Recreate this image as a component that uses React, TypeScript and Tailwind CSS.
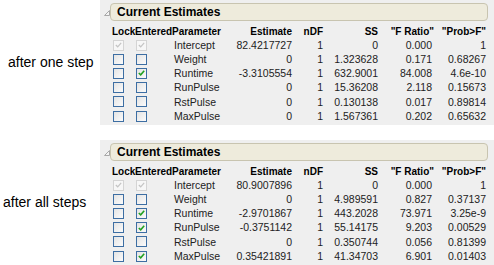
import React from "react";

type Row = {
  name: string;
  lock: "dis" | "off";
  entered: "dis" | "off" | "on";
  est: string;
  ndf: string;
  ss: string;
  f: string;
  p: string;
};

const ONE_STEP: Row[] = [
  { name: "Intercept", lock: "dis", entered: "dis", est: "82.4217727", ndf: "1", ss: "0", f: "0.000", p: "1" },
  { name: "Weight", lock: "off", entered: "off", est: "0", ndf: "1", ss: "1.323628", f: "0.171", p: "0.68267" },
  { name: "Runtime", lock: "off", entered: "on", est: "-3.3105554", ndf: "1", ss: "632.9001", f: "84.008", p: "4.6e-10" },
  { name: "RunPulse", lock: "off", entered: "off", est: "0", ndf: "1", ss: "15.36208", f: "2.118", p: "0.15673" },
  { name: "RstPulse", lock: "off", entered: "off", est: "0", ndf: "1", ss: "0.130138", f: "0.017", p: "0.89814" },
  { name: "MaxPulse", lock: "off", entered: "off", est: "0", ndf: "1", ss: "1.567361", f: "0.202", p: "0.65632" },
];

const ALL_STEPS: Row[] = [
  { name: "Intercept", lock: "dis", entered: "dis", est: "80.9007896", ndf: "1", ss: "0", f: "0.000", p: "1" },
  { name: "Weight", lock: "off", entered: "off", est: "0", ndf: "1", ss: "4.989591", f: "0.827", p: "0.37137" },
  { name: "Runtime", lock: "off", entered: "on", est: "-2.9701867", ndf: "1", ss: "443.2028", f: "73.971", p: "3.25e-9" },
  { name: "RunPulse", lock: "off", entered: "on", est: "-0.3751142", ndf: "1", ss: "55.14175", f: "9.203", p: "0.00529" },
  { name: "RstPulse", lock: "off", entered: "off", est: "0", ndf: "1", ss: "0.350744", f: "0.056", p: "0.81399" },
  { name: "MaxPulse", lock: "off", entered: "on", est: "0.35421891", ndf: "1", ss: "41.34703", f: "6.901", p: "0.01403" },
];

const COLS = "grid grid-cols-[23px_37px_58px_62px_31px_55px_56px_52px]";

function Box({ state }: { state: "dis" | "off" | "on" }) {
  if (state === "dis") {
    return (
      <div className="w-[11px] h-[11px] border border-[#d4d4d4] bg-[#f7f7f7] flex items-center justify-center">
        <svg width="7" height="6" viewBox="0 0 7 6">
          <path d="M0.8 3 L2.7 4.8 L6.2 0.8" fill="none" stroke="#c4c4c4" strokeWidth="1.2" />
        </svg>
      </div>
    );
  }
  return (
    <div className="w-[11px] h-[11px] border border-[#3d6ea3] bg-gradient-to-br from-[#e4e4e4] to-[#fbfbfb] flex items-center justify-center">
      {state === "on" && (
        <svg width="7" height="6" viewBox="0 0 7 6">
          <path d="M0.8 3 L2.7 4.8 L6.2 0.8" fill="none" stroke="#21a121" strokeWidth="1.6" />
        </svg>
      )}
    </div>
  );
}

function Panel({ rows }: { rows: Row[] }) {
  return (
    <div className="w-[394px] h-[125px] bg-[#efefef] pt-[3px] pl-[4px]">
      <div className="flex items-center h-[18px]">
        <svg width="6" height="6" viewBox="0 0 6 6" className="mr-[0px] mt-[2px]">
          <polygon points="5.5,0.5 5.5,5.5 0.5,5.5" fill="#f4f4f4" stroke="#a8a8a8" strokeWidth="1" />
        </svg>
        <div className="ml-[0px] w-[378px] h-[18px] rounded-[4px] border border-[#c8c4b0] bg-[#eeebdc] pl-[6px] flex items-center text-[12px] font-bold text-black leading-none">
          Current Estimates
        </div>
      </div>
      <div className="pl-[8px] pt-[4px] text-[10.5px] leading-none text-[#222]" style={{ fontFamily: '"Liberation Sans", Arial, sans-serif' }}>
        <div className={`${COLS} h-[13px] items-center text-[10px] font-bold text-black`}>
          <div>Lock</div>
          <div>Entered</div>
          <div>Parameter</div>
          <div className="text-right">Estimate</div>
          <div className="text-right">nDF</div>
          <div className="text-right">SS</div>
          <div className="text-right">"F Ratio"</div>
          <div className="text-right">"Prob&gt;F"</div>
        </div>
        {rows.map((r) => (
          <div key={r.name} className={`${COLS} h-[14.2px] items-center`}>
            <div className="pl-[1px]">
              <Box state={r.lock} />
            </div>
            <div className="pl-[1px]">
              <Box state={r.entered} />
            </div>
            <div className="pl-[2px]">{r.name}</div>
            <div className="text-right">{r.est}</div>
            <div className="text-right">{r.ndf}</div>
            <div className="text-right">{r.ss}</div>
            <div className="text-right pr-[2px]">{r.f}</div>
            <div className="text-right">{r.p}</div>
          </div>
        ))}
      </div>
    </div>
  );
}

export default function App() {
  return (
    <div className="w-[494px] h-[265px] bg-white" style={{ fontFamily: '"Liberation Sans", Arial, sans-serif' }}>
      <div className="flex items-center">
        <div className="w-[100px] pl-[8px] text-[14px] text-black">after one step</div>
        <Panel rows={ONE_STEP} />
      </div>
      <div className="flex items-center mt-[15px]">
        <div className="w-[100px] pl-[3px] text-[14px] text-black">after all steps</div>
        <Panel rows={ALL_STEPS} />
      </div>
    </div>
  );
}
